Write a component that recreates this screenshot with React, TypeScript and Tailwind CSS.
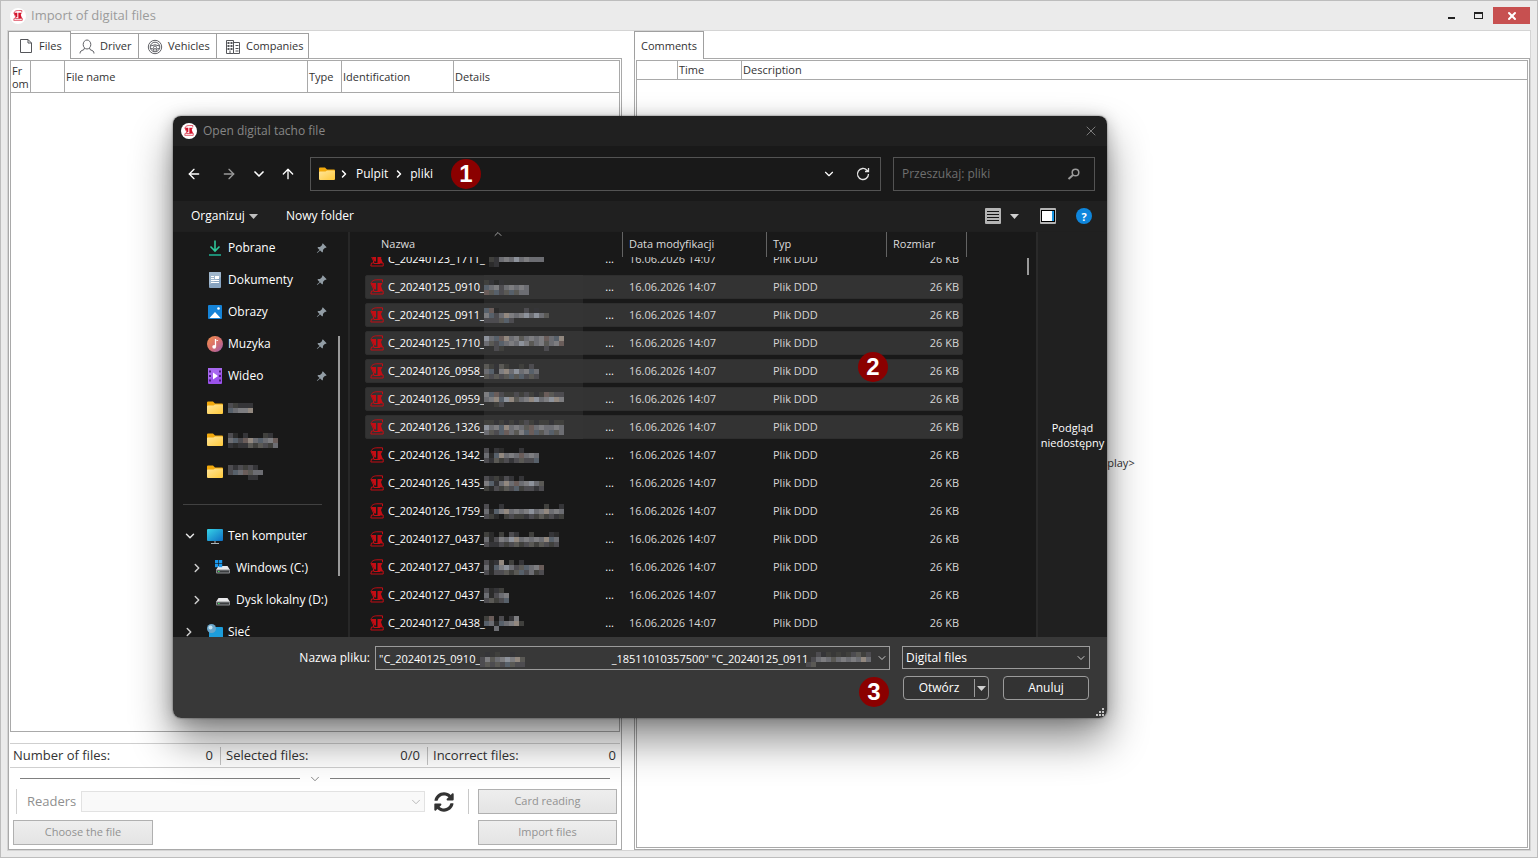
import React from 'react';
import { ArrowLeft, ArrowRight, ArrowUp, ChevronDown, ChevronRight, ChevronUp, X } from 'lucide-react';
import { BsPinAngleFill } from 'react-icons/bs';
import { FaSyncAlt } from 'react-icons/fa';

const PIXEL_COLORS: Record<string, string> = {
  '1': '#2b2b2b',
  '2': '#353538',
  '3': '#40403d',
  '4': '#4d4c50',
  '5': '#57606a',
  '6': '#6a5d5a',
  '7': '#6c6d72',
  '8': '#7d7d80',
  '9': '#8d929b',
  a: '#92887f',
  b: '#5a5955',
};

/* Pixelated blob that stands in for a person's name. One string per pixel row. */
function Mosaic({ rows }: { rows: string[] }) {
  const width = Math.max(...rows.map((r) => r.length)) * 5;
  const height = rows.length * 5;
  return (
    <svg width={width} height={height} shapeRendering="crispEdges" className="block shrink-0" aria-hidden>
      {rows.map((row, y) =>
        row.split('').map((c, x) =>
          c === '.' ? null : (
            <rect key={`${x}-${y}`} x={x * 5} y={y * 5} width={5} height={5} fill={PIXEL_COLORS[c]} />
          ),
        ),
      )}
    </svg>
  );
}

function TachoGlyph({ className }: { className?: string }) {
  return (
    <svg viewBox="0 0 14 16" className={className} fill="none" stroke="currentColor" aria-hidden>
      <path d="M1 4.500C2 1 5 .8 8 .8h4.500v2.500M1 4.500l2.500 5.500v2" />
      <path d="M1 4h5v6.500H4.500z" fill="currentColor" stroke="none" />
      <path d="M7.500 4h5L11 7l1.800 5H7.500z" fill="currentColor" stroke="none" />
      <path d="M4.500 12H1.500L.8 15h12.400v-3H9.500M4 12.500h6" />
    </svg>
  );
}

function AppLogo() {
  return (
    <span className="flex h-4 w-4 shrink-0 items-center justify-center rounded-full bg-white text-[#d3122a]">
      <TachoGlyph className="h-[11px] w-[10px]" />
    </span>
  );
}

function FolderIcon() {
  return (
    <svg viewBox="0 0 16 14" className="h-[14px] w-4 shrink-0" aria-hidden>
      <defs>
        <linearGradient id="folder" x1="0" y1="0" x2="1" y2="1">
          <stop offset="0" stopColor="#ffe69b" />
          <stop offset="1" stopColor="#ffc93a" />
        </linearGradient>
      </defs>
      <path d="M0 1.500Q0 .5 1 .5h5l2 2h7q1 0 1 1V8H0z" fill="#f2a90c" />
      <path d="M0 5.500Q0 4.500 1 4.500h5.500l1.500-1h7q1 0 1 1V12q0 1-1 1H1q-1 0-1-1z" fill="url(#folder)" />
    </svg>
  );
}

function DownloadIcon() {
  return (
    <svg viewBox="0 0 16 16" className="h-4 w-4 shrink-0" fill="none" strokeWidth="1.600" aria-hidden>
      <path d="M8 .5v10.500M3.500 6.500 8 11l4.500-4.500" stroke="#2fc79a" />
      <path d="M2 15h12" stroke="#1fa98d" />
    </svg>
  );
}

function DocumentIcon() {
  return (
    <svg viewBox="0 0 16 16" className="h-4 w-4 shrink-0" aria-hidden>
      <rect x="2" width="12" height="16" rx="1" fill="#87a3c0" />
      <path d="M2 1q0-1 1-1h10q1 0 1 1v4L2 13z" fill="#a0b7cd" />
      <path d="M4 4.500h3M4 6.500h3M4 8.500h8M4 10.500h8" stroke="#fff" />
      <rect x="8" y="4" width="4" height="3" fill="#fff" />
    </svg>
  );
}

function PictureIcon() {
  return (
    <svg viewBox="0 0 16 16" className="h-4 w-4 shrink-0" aria-hidden>
      <rect x="1" y="1" width="14" height="14" rx="1" fill="#1583d7" />
      <path d="M2.500 14 8 8l5.500 6z" fill="#fff" />
      <circle cx="11.500" cy="4.500" r="1.300" fill="#fff" />
    </svg>
  );
}

function MusicIcon() {
  return (
    <svg viewBox="0 0 16 16" className="h-4 w-4 shrink-0" aria-hidden>
      <defs>
        <linearGradient id="music" x1="0" y1="0" x2="1" y2="1">
          <stop offset="0" stopColor="#f0914e" />
          <stop offset="0.500" stopColor="#d9706b" />
          <stop offset="1" stopColor="#9a5cb4" />
        </linearGradient>
      </defs>
      <circle cx="8" cy="8" r="8" fill="url(#music)" />
      <path d="M8.500 3v7.500M8.500 3.500l2.500 1" stroke="#fff" strokeWidth="1.300" fill="none" />
      <circle cx="7.200" cy="10.800" r="1.900" fill="#fff" />
    </svg>
  );
}

function VideoIcon() {
  return (
    <svg viewBox="0 0 16 16" className="h-4 w-4 shrink-0" aria-hidden>
      <rect x="1" width="14" height="16" rx="1" fill="#9a52ea" />
      <path d="M1 0h14v5L1 11z" fill="#a868f0" />
      <path d="M6 4.500v7l5-3.500z" fill="#fff" />
      <path d="M2 3.500h2M2 8h2M2 12.500h2M12 3.500h2M12 8h2M12 12.500h2" stroke="#4a1f7c" strokeWidth="2" />
    </svg>
  );
}

function ComputerIcon() {
  return (
    <svg viewBox="0 0 16 16" className="h-4 w-4 shrink-0" aria-hidden>
      <defs>
        <linearGradient id="screen" x1="0" y1="0" x2="1" y2="1">
          <stop offset="0" stopColor="#36d3e6" />
          <stop offset="1" stopColor="#0f6fc4" />
        </linearGradient>
      </defs>
      <rect y="1" width="16" height="12" rx="1" fill="url(#screen)" />
      <path d="M8 13v2M4 15.500h8" stroke="#aab3b8" />
    </svg>
  );
}

function DriveIcon({ windows }: { windows?: boolean }) {
  return (
    <svg viewBox="0 0 16 16" className="h-4 w-4 shrink-0" aria-hidden>
      <path d="M3.500 6h9L15 10H1z" fill="#e8e8ea" />
      <rect x="1" y="9.500" width="14" height="4" rx="1" fill="#8b8d90" />
      <rect x="2" y="10.500" width="12" height="2" fill="#3c3e40" />
      <rect x="3" y="11" width="1.500" height="1" fill="#42e05c" />
      {windows && (
        <g fill="#1b97ea">
          <rect width="3.300" height="3.300" />
          <rect x="3.900" width="3.300" height="3.300" />
          <rect y="3.900" width="3.300" height="3.300" />
          <rect x="3.900" y="3.900" width="3.300" height="3.300" />
        </g>
      )}
    </svg>
  );
}

function NetworkIcon() {
  return (
    <svg viewBox="0 0 16 16" className="h-4 w-4 shrink-0" aria-hidden>
      <rect x="2" y="3" width="14" height="11" rx="1" fill="#1c9ddb" />
      <circle cx="4.500" cy="4.500" r="4.500" fill="#6aa5c9" />
      <circle cx="3.500" cy="3.500" r="2" fill="#c2e2f2" />
    </svg>
  );
}

function FileTabIcon() {
  return (
    <svg viewBox="0 0 14 16" className="h-4 w-[14px] shrink-0" fill="none" stroke="#55565a" aria-hidden>
      <path d="M1.500 1.500h7.500l3.500 3.500v9.500h-11zM9 1.500V5h3.500" />
    </svg>
  );
}

function DriverTabIcon() {
  return (
    <svg viewBox="0 0 16 16" className="h-4 w-4 shrink-0" fill="none" stroke="#606166" aria-hidden>
      <ellipse cx="8" cy="5.500" rx="3.800" ry="4.500" />
      <path d="M5.500 9 5 10.500l-3 1.500q-1 .8-1 2.500M10.500 9l.5 1.500 3 1.500q1 .8 1 2.500" />
    </svg>
  );
}

function WheelTabIcon() {
  return (
    <svg viewBox="0 0 16 16" className="h-4 w-4 shrink-0" fill="none" stroke="#606166" aria-hidden>
      <circle cx="8" cy="8" r="6.700" />
      <circle cx="8" cy="8" r="4.800" />
      <path d="M3.500 7q4.500-2.500 9 0M3.500 9.500l3 .5.5 2.500M12.500 9.500l-3 .5-.5 2.500" />
      <circle cx="8" cy="8.500" r="1.500" />
    </svg>
  );
}

function BuildingTabIcon() {
  return (
    <svg viewBox="0 0 16 16" className="h-4 w-4 shrink-0" fill="none" stroke="#55565a" aria-hidden>
      <path d="M1.500 14.500v-13h7v13zM8.500 3.500h6v11h-6" />
      <path d="M3.500 3v8M6.500 3v8" strokeWidth="2" strokeDasharray="2 1" />
      <path d="M5 11.500v3M10.500 6.500h3M10.500 9.500h3M10.500 12h3" />
    </svg>
  );
}

const TABS = [
  { label: 'Driver', icon: <DriverTabIcon />, width: 'w-[68px]' },
  { label: 'Vehicles', icon: <WheelTabIcon />, width: 'w-[78px]' },
  { label: 'Companies', icon: <BuildingTabIcon />, width: 'w-[92px]' },
];

function StatCell({ label, value, className }: { label: string; value: string; className: string }) {
  return (
    <div className={`flex h-[18px] items-center justify-between text-[13px] ${className}`}>
      <span>{label}</span>
      <span>{value}</span>
    </div>
  );
}

const flatButton =
  'h-[25px] border border-[#b0b0b0] bg-linear-to-b from-[#eeeeee] to-[#e4e4e4] text-[11px] text-[#929292]';

const headCell = 'border-r border-b border-[#a9a9a9] pl-px text-left font-normal last:border-r-0';

function FilesPanel() {
  return (
    <section className="flex w-[614px] shrink-0 flex-col">
      <div role="tablist" className="z-10 flex h-[28px] items-end">
        <button
          type="button"
          role="tab"
          aria-selected
          className="-mb-px flex h-[28px] w-[63px] items-center gap-[6px] self-start border border-b-0 border-[#a0a0a0] bg-white pt-px pl-[10px]"
        >
          <FileTabIcon />
          Files
        </button>
        {TABS.map((t) => (
          <button
            key={t.label}
            type="button"
            role="tab"
            aria-selected={false}
            className={`flex h-[26px] items-center gap-[5px] border border-l-0 border-[#a0a0a0] bg-white pt-px pl-2 ${t.width}`}
          >
            {t.icon}
            {t.label}
          </button>
        ))}
      </div>
      <div className="-mt-px flex min-h-0 flex-1 flex-col border border-[#a9a9a9]">
        <div className="m-px mb-[11px] flex-1 border border-[#a9a9a9]">
          <table className="w-full table-fixed border-separate border-spacing-0">
            <thead>
              <tr className="h-8 leading-[13px]">
                <th className={`${headCell} w-5`}>
                  Fr
                  <br />
                  om
                </th>
                <th className={`${headCell} w-[34px]`} />
                <th className={`${headCell} w-[243px]`}>File name</th>
                <th className={`${headCell} w-[34px]`}>Type</th>
                <th className={`${headCell} w-[112px]`}>Identification</th>
                <th className={headCell}>Details</th>
              </tr>
            </thead>
          </table>
        </div>
        <div className="mx-px flex h-[25px] items-center border-y border-[#cfcfcf]">
          <StatCell label="Number of files:" value="0" className="w-[211px] border-r border-[#c4c4c4] pr-[7px] pl-[3px]" />
          <StatCell label="Selected files:" value="0/0" className="w-[207px] border-r border-[#c4c4c4] pr-[7px] pl-[5px]" />
          <StatCell label="Incorrect files:" value="0" className="flex-1 pr-1 pl-[5px]" />
        </div>
        <button type="button" aria-label="Collapse" className="mx-[11px] flex h-[21px] items-center gap-2">
          <span className="h-px flex-1 bg-[#808080]" />
          <ChevronDown className="h-[14px] w-[14px] text-[#777]" strokeWidth={1.5} />
          <span className="h-px flex-1 bg-[#808080]" />
        </button>
        <div className="mr-1 ml-[7px] flex h-[25px] items-center border-l border-[#cfcfcf] pl-[10px]">
          <label htmlFor="readers" className="w-[54px] text-[13px] text-[#8f8f8f]">
            Readers
          </label>
          <div className="relative mr-[9px] flex-1">
            <select
              id="readers"
              disabled
              className="block h-[21px] w-full appearance-none border border-[#e2e2e2] bg-[#f9f9f9]"
            />
            <ChevronDown className="pointer-events-none absolute top-1 right-[2px] h-[14px] w-[14px] text-[#b0b0b0]" strokeWidth={1.5} />
          </div>
          <button type="button" aria-label="Refresh readers" className="mr-[14px] text-[#333]">
            <FaSyncAlt className="h-5 w-5" />
          </button>
          <div className="h-[25px] border-l border-[#c8c8c8] pl-[9px]">
            <button type="button" className={`${flatButton} w-[139px]`}>
              Card reading
            </button>
          </div>
        </div>
        <div className="mt-[6px] mr-1 mb-1 ml-1 flex justify-between">
          <button type="button" className={`${flatButton} w-[140px]`}>
            Choose the file
          </button>
          <button type="button" className={`${flatButton} w-[139px]`}>
            Import files
          </button>
        </div>
      </div>
    </section>
  );
}

function CommentsPanel() {
  return (
    <section className="flex min-w-0 flex-1 flex-col">
      <div role="tablist" className="z-10 flex h-[28px]">
        <button
          type="button"
          role="tab"
          aria-selected
          className="h-[28px] w-[70px] border border-b-0 border-[#a0a0a0] bg-white pt-[2px]"
        >
          Comments
        </button>
      </div>
      <div className="-mt-px flex flex-1 flex-col border border-[#a9a9a9] p-px">
        <div className="flex flex-1 flex-col border border-[#a9a9a9]">
          <table className="w-full table-fixed border-separate border-spacing-0">
            <thead>
              <tr className="h-[19px]">
                <th className={`${headCell} w-[41px]`} />
                <th className={`${headCell} w-[64px]`}>Time</th>
                <th className={headCell}>Description</th>
              </tr>
            </thead>
          </table>
          <div className="flex flex-1 items-center justify-center">{'<No data to display>'}</div>
        </div>
      </div>
    </section>
  );
}

const PINNED = [
  { label: 'Pobrane', icon: <DownloadIcon /> },
  { label: 'Dokumenty', icon: <DocumentIcon /> },
  { label: 'Obrazy', icon: <PictureIcon /> },
  { label: 'Muzyka', icon: <MusicIcon /> },
  { label: 'Wideo', icon: <VideoIcon /> },
];

const FOLDERS = [
  ['43222', '5788a'],
  ['41.2...32.', '7546a75786', '2122b3b437'],
  ['424342.', '4576b77', '....22.'],
];

function Sidebar() {
  return (
    <nav className="flex w-[177px] shrink-0 overflow-hidden border-r-2 border-[#272727]">
      <ul className="w-[157px]">
        {PINNED.map((p) => (
          <li key={p.label} className="flex h-8 items-center pl-[34px]">
            {p.icon}
            <a href="#" className="ml-[5px] flex-1 text-[12px]">
              {p.label}
            </a>
            <BsPinAngleFill className="mr-[3px] h-[11px] w-[11px] text-[#929da5]" />
          </li>
        ))}
        {FOLDERS.map((rows, i) => (
          <li key={i} className="flex h-8 items-center gap-[5px] pl-[34px]">
            <FolderIcon />
            <Mosaic rows={rows} />
          </li>
        ))}
        <li className="flex h-8 items-center pr-2 pl-[10px]">
          <hr className="w-full border-[#414141]" />
        </li>
        <li className="flex h-8 items-center pl-[10px]">
          <ChevronDown className="mr-[10px] h-[14px] w-[14px] text-[#e6e6e6]" strokeWidth={2.5} />
          <ComputerIcon />
          <a href="#" className="ml-[5px] text-[12px]">
            Ten komputer
          </a>
        </li>
        <li className="flex h-8 items-center pl-[17px]">
          <ChevronRight className="mr-[11px] h-[14px] w-[14px] text-[#cfcfcf]" strokeWidth={2.5} />
          <DriveIcon windows />
          <a href="#" className="ml-[5px] text-[12px] whitespace-nowrap">
            Windows (C:)
          </a>
        </li>
        <li className="flex h-8 items-center pl-[17px]">
          <ChevronRight className="mr-[11px] h-[14px] w-[14px] text-[#cfcfcf]" strokeWidth={2.5} />
          <DriveIcon />
          <a href="#" className="ml-[5px] text-[12px] whitespace-nowrap">
            Dysk lokalny (D:)
          </a>
        </li>
        <li className="flex h-8 items-center pl-[9px]">
          <ChevronRight className="mr-[11px] h-[14px] w-[14px] text-[#cfcfcf]" strokeWidth={2.5} />
          <NetworkIcon />
          <a href="#" className="ml-[5px] text-[12px]">
            Sieć
          </a>
        </li>
      </ul>
      <div className="mt-[104px] ml-2 h-[240px] w-[2px] bg-[#9a9a9a]" />
    </nav>
  );
}

interface FileRow {
  name: string;
  blob: string[];
  selected?: boolean;
  last?: boolean;
}

const FILES: FileRow[] = [
  { name: 'C_20240123_1711_', blob: ['.2.1...3....', '.32787978777', '.12.........'] },
  { name: 'C_20240125_0910_', blob: ['3212.....', '578478787', '6b54b5b77'], selected: true },
  { name: 'C_20240125_0911_', blob: ['561.....4.2.', '8547a8789797b', '444b54.......'], selected: true },
  { name: 'C_20240125_1710_', blob: ['9756a78b7878675a', '7b4578798b78b786', '..43........4...'], selected: true },
  { name: 'C_20240126_0958_', blob: ['b32b3..3.4.', '7528a797857', 'b4b4b5b54b4'], selected: true },
  { name: 'C_20240126_0959_', blob: ['8564334343236b44', '78a59ab78a9789a8', '..34............'], selected: true },
  { name: 'C_20240126_1326_', blob: ['3323232343233233', '9785a787b6787787', '7b4567b8565b75b7'], selected: true, last: true },
  { name: 'C_20240126_1342_', blob: ['4.21...2...', '715a7876787', '42b3424b445'] },
  { name: 'C_20240126_1435_', blob: ['423142.2....', '8527a767897b', '3143b4534424'] },
  { name: 'C_20240126_1759_', blob: ['4..2........3..2', '7158a7878978a787', '431.3433243b3423'] },
  { name: 'C_20240127_0437_', blob: ['31.3.42..3...21', '714879a78787a57', '422434b34b3b434'] },
  { name: 'C_20240127_0437_', blob: ['412a.3.2....', '7158974b5786', '4144b3b54734'] },
  { name: 'C_20240127_0437_', blob: ['4123.', '71478', '4b345'] },
  { name: 'C_20240127_0438_', blob: ['36.4.28.', '571578a3', '..7.....'] },
];

function FileList() {
  return (
    <table className="flex min-w-0 flex-1 flex-col text-[11px]">
      <thead className="relative block">
        <tr className="flex h-[25px] pl-[15px] text-left text-[#dcdcdc]">
          <th className="w-[258px] border-r border-[#636363] pl-4 leading-6 font-normal">Nazwa</th>
          <th className="w-[144px] border-r border-[#636363] pl-[6px] leading-6 font-normal">Data modyfikacji</th>
          <th className="w-[120px] border-r border-[#636363] pl-[6px] leading-6 font-normal">Typ</th>
          <th className="w-20 border-r border-[#636363] pl-[6px] leading-6 font-normal">Rozmiar</th>
        </tr>
        <tr className="absolute top-[-4px] left-[142px]">
          <td>
            <ChevronUp className="h-3 w-3 text-[#a0a0a0]" strokeWidth={2} />
          </td>
        </tr>
      </thead>
      <tbody className="block min-h-0 flex-1 overflow-hidden">
        {FILES.map((f, i) => (
          <tr
            key={i}
            className={`mb-1 ml-[15px] flex h-6 w-[598px] items-center rounded-xs border first:-mt-[10px] ${
              f.selected ? 'border-[#2e2e2e] bg-[#333333]' : 'border-transparent'
            }`}
          >
            <td className="flex w-[118px] items-center gap-1 pl-1 whitespace-nowrap text-white">
              <TachoGlyph className="h-4 w-[14px] shrink-0 text-[#c40d14]" />
              {f.name}
            </td>
            <td
              className={`flex h-6 w-[99px] items-center ${f.selected ? 'bg-[#343434]' : ''} ${
                f.selected && !f.last ? 'shadow-[0_4px_0_#262626]' : ''
              }`}
            >
              <Mosaic rows={f.blob} />
            </td>
            <td className="w-8 pr-px text-right text-white">...</td>
            <td className="w-[144px] pl-[14px] text-[#d6d6d6]">16.06.2026 14:07</td>
            <td className="w-[120px] pl-[14px] text-[#d6d6d6]">Plik DDD</td>
            <td className="flex-1 pr-[3px] text-right text-[#d6d6d6]">26 KB</td>
          </tr>
        ))}
      </tbody>
    </table>
  );
}

function StepBadge({ step, className }: { step: number; className: string }) {
  return (
    <span
      className={`absolute flex h-[30px] w-[30px] items-center justify-center rounded-full bg-[#8b0000] font-['Liberation_Sans',sans-serif] text-[24px] leading-none font-bold text-white ${className}`}
    >
      {step}
    </span>
  );
}

function OpenFileDialog() {
  const fileNames = `"C_20240125_0910_${' '.repeat(46)}_18511010357500" "C_20240125_0911_`;
  return (
    <div
      role="dialog"
      aria-label="Open digital tacho file"
      className="absolute top-[115px] left-[172px] z-20 flex h-[602px] w-[934px] flex-col rounded-lg text-white shadow-[0_0_2px_rgba(0,0,0,0.6),0_22px_42px_rgba(0,0,0,0.46),0_2px_16px_rgba(0,0,0,0.22)]"
    >
      <header className="flex h-[30px] shrink-0 items-center rounded-t-lg bg-[#202020] pr-2 pb-px pl-2">
        <AppLogo />
        <h2 className="ml-[6px] flex-1 text-[12px] text-[#868686]">Open digital tacho file</h2>
        <button type="button" aria-label="Close" className="text-[#8a8a8a]">
          <X className="h-4 w-4" strokeWidth={1.3} />
        </button>
      </header>

      <div className="flex h-[55px] shrink-0 items-center bg-[#191919] pr-3 pl-[13px]">
        <button type="button" aria-label="Back" className="mr-[19px]">
          <ArrowLeft className="h-4 w-4" strokeWidth={2} />
        </button>
        <button type="button" aria-label="Forward" className="mr-[14px] text-[#9a9a9a]">
          <ArrowRight className="h-4 w-4" strokeWidth={2} />
        </button>
        <button type="button" aria-label="Recent locations" className="mr-[13px]">
          <ChevronDown className="h-4 w-4" strokeWidth={2.5} />
        </button>
        <button type="button" aria-label="Up" className="mr-[14px]">
          <ArrowUp className="h-4 w-4" strokeWidth={2} />
        </button>
        <div className="flex h-[34px] flex-1 items-center border border-[#535353] pr-[9px] pl-2 text-[12px]">
          <FolderIcon />
          <ChevronRight className="mx-[3px] h-3 w-3" strokeWidth={3} />
          <a href="#" className="ml-[3px]">
            Pulpit
          </a>
          <ChevronRight className="mx-[5px] h-3 w-3" strokeWidth={3} />
          <a href="#" className="flex-1">
            pliki
          </a>
          <button type="button" aria-label="Previous locations" className="mr-[19px]">
            <ChevronDown className="h-[14px] w-[14px]" strokeWidth={2} />
          </button>
          <button type="button" aria-label="Refresh">
            <svg viewBox="0 0 16 16" className="h-4 w-4" fill="none" stroke="#e4e4e4" strokeWidth="1.300" aria-hidden>
              <path d="M13.500 8A5.500 5.500 0 1 1 12 4.200L13.300 5.500M13.500 2v3.500H10" />
            </svg>
          </button>
        </div>
        <label className="ml-3 flex h-[34px] w-[202px] items-center border border-[#535353] pr-[13px] pl-2">
          <input
            type="text"
            aria-label="Przeszukaj: pliki"
            placeholder="Przeszukaj: pliki"
            className="min-w-0 flex-1 bg-transparent text-[12px] outline-none placeholder:text-[#6f6f6f]"
          />
          <svg viewBox="0 0 14 14" className="h-[14px] w-[14px]" fill="none" stroke="#9b9b9b" strokeWidth="1.500" aria-hidden>
            <circle cx="8.500" cy="5.500" r="3.300" />
            <path d="M6 8 1.500 12" strokeWidth="2" />
          </svg>
        </label>
      </div>

      <div className="flex h-[30px] shrink-0 items-center bg-[#202020] pr-[15px] pl-[18px] text-[12px]">
        <button type="button" className="flex w-[95px] items-center gap-1">
          Organizuj
          <svg viewBox="0 0 9 5" className="h-[5px] w-[9px]" fill="#bfbfbf" aria-hidden>
            <path d="M0 0h9L4.500 5z" />
          </svg>
        </button>
        <button type="button">Nowy folder</button>
        <div className="flex-1" />
        <button type="button" aria-label="View" className="flex items-center gap-[9px]">
          <svg viewBox="0 0 16 16" className="h-4 w-4" aria-hidden>
            <rect width="16" height="16" rx="1" fill="#b4b4b4" />
            <path d="M2 3.500h12M2 6.500h12M2 9.500h12M2 12.500h12" stroke="#141414" />
          </svg>
          <svg viewBox="0 0 9 5" className="h-[5px] w-[9px]" fill="#d0d0d0" aria-hidden>
            <path d="M0 0h9L4.500 5z" />
          </svg>
        </button>
        <button type="button" aria-label="Preview pane" className="ml-[21px]">
          <svg viewBox="0 0 16 16" className="h-4 w-4" aria-hidden>
            <rect width="16" height="16" rx="1" fill="#b4b4b4" />
            <rect x="1" y="2" width="14" height="12" fill="#000" />
            <rect x="2" y="3" width="10" height="10" fill="#fff" />
            <rect x="12" y="3" width="2" height="10" fill="#1793e0" />
          </svg>
        </button>
        <button
          type="button"
          aria-label="Help"
          className="ml-5 flex h-4 w-4 items-center justify-center rounded-full bg-[#0f86dc] text-[11px] leading-none font-bold"
        >
          ?
        </button>
      </div>

      <div className="flex min-h-0 flex-1 border-t border-[#1f1f1f] bg-[#191919]">
        <Sidebar />
        <FileList />
        <div className="mt-[26px] mr-[7px] h-[17px] w-[2px] bg-[#9a9a9a]" />
        <aside className="flex w-[71px] shrink-0 items-center justify-center overflow-hidden border-l-2 border-[#2a2a2a] bg-[#202020]">
          <p className="text-center leading-[15px]">
            Podgląd
            <br />
            niedostępny
          </p>
        </aside>
      </div>

      <footer className="relative h-[81px] shrink-0 rounded-b-lg bg-[#383838] pt-[9px] pr-[17px]">
        <div className="flex items-start">
          <label htmlFor="file-name" className="w-[202px] pr-[5px] text-right text-[12px] leading-6">
            Nazwa pliku:
          </label>
          <div className="relative flex-1">
            <input
              id="file-name"
              type="text"
              readOnly
              value={fileNames}
              className="block h-6 w-full border border-[#9b9b9b] bg-[#383838] pl-[3px] text-[11px] text-white outline-none"
            />
            <div className="absolute top-[6px] left-[105px]">
              <Mosaic rows={['.2.3..2..', '48b7898ab', '4b4b45b44']} />
            </div>
            <div className="absolute top-[6px] left-[431px]">
              <Mosaic rows={['..423.3.34b34', '.4787b78787a7', '4b...........']} />
            </div>
            <ChevronDown className="pointer-events-none absolute top-[6px] right-[2px] h-3 w-3 text-[#c8c8c8]" strokeWidth={2} />
          </div>
          <div className="relative ml-3 w-[188px]">
            <select
              aria-label="File type"
              className="block h-[23px] w-full appearance-none border border-[#9b9b9b] bg-[#333333] pl-[3px] text-[12px] text-white"
            >
              <option>Digital files</option>
            </select>
            <ChevronDown className="pointer-events-none absolute top-[6px] right-[3px] h-3 w-3 text-[#c8c8c8]" strokeWidth={2} />
          </div>
        </div>
        <div className="mt-[6px] mr-px flex justify-end gap-[14px] text-[12px]">
          <div className="flex h-6 w-[86px] items-center rounded-[4px] border border-[#9b9b9b] bg-[#333333]">
            <button type="button" className="flex-1">
              Otwórz
            </button>
            <button type="button" aria-label="Open options" className="flex h-[18px] items-center border-l border-[#9b9b9b] px-[2px]">
              <svg viewBox="0 0 9 5" className="h-[5px] w-[9px]" fill="#d0d0d0" aria-hidden>
                <path d="M0 0h9L4.500 5z" />
              </svg>
            </button>
          </div>
          <button type="button" className="h-6 w-[86px] rounded-[4px] border border-[#9b9b9b] bg-[#333333]">
            Anuluj
          </button>
        </div>
        <svg viewBox="0 0 8 8" className="absolute right-[3px] bottom-[2px] h-2 w-2" fill="#c4c4c4" shapeRendering="crispEdges" aria-hidden>
          <path d="M6 0h2v2H6zM3 3h2v2H3zM6 3h2v2H6zM0 6h2v2H0zM3 6h2v2H3zM6 6h2v2H6z" />
        </svg>
      </footer>

      <StepBadge step={1} className="top-[43px] left-[278px]" />
      <StepBadge step={2} className="top-[236px] left-[685px]" />
      <StepBadge step={3} className="top-[561px] left-[686px]" />
    </div>
  );
}

export default function App() {
  return (
    <div className="relative flex h-screen min-h-[700px] w-full flex-col overflow-hidden border border-[#bdbdbd] bg-[#ebebeb] font-['Open_Sans','Noto_Sans',sans-serif] text-[11px] text-[#333333]">
      <header className="flex h-[29px] shrink-0 items-center pr-[7px] pl-[9px]">
        <AppLogo />
        <h1 className="ml-[5px] flex-1 text-[13px] text-[#9b9b9b]">Import of digital files</h1>
        <button type="button" aria-label="Minimize" className="mr-[19px] pt-1">
          <span className="block h-[2px] w-[7px] bg-[#222]" />
        </button>
        <button type="button" aria-label="Maximize" className="mr-[10px]">
          <span className="block h-[7px] w-[9px] border border-t-2 border-[#222]" />
        </button>
        <button type="button" aria-label="Close window" className="flex h-[17px] w-[37px] items-center justify-center bg-[#c75050] text-white">
          <X className="h-3 w-3" strokeWidth={4} />
        </button>
      </header>
      <main className="mx-[6px] mb-[6px] flex min-h-0 flex-1 gap-3 border border-[#d4d4d4] bg-white">
        <FilesPanel />
        <CommentsPanel />
      </main>
      <OpenFileDialog />
    </div>
  );
}
